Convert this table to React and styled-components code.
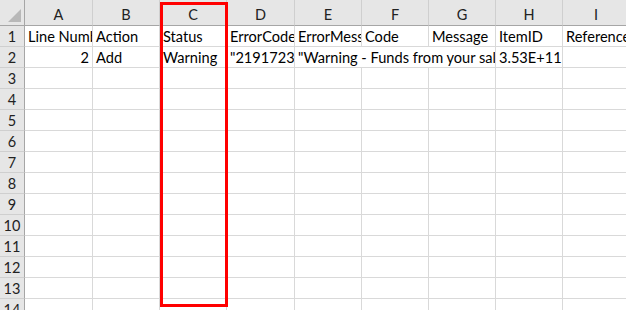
import React from "react";
import styled, { createGlobalStyle } from "styled-components";

const Global = createGlobalStyle`
  html, body { margin: 0; padding: 0; background: #fff; }
  body { font-family: Lato, "Open Sans", "Liberation Sans", sans-serif; }
`;

const widths = [25, 68, 67, 67, 68, 67, 67, 67, 67, 67];

const Sheet = styled.div`
  position: relative;
  width: 626px;
  height: 310px;
  overflow: hidden;
  background: #fff;
`;

const Grid = styled.div`
  display: grid;
  grid-template-columns: ${widths.map((w) => w + "px").join(" ")};
  grid-template-rows: 26px repeat(14, 21px);
  width: 630px;
`;

const Corner = styled.div`
  position: relative;
  background: #e6e6e6;
  border-right: 1px solid #a6a6a6;
  border-bottom: 1px solid #a6a6a6;
  box-sizing: border-box;
  &::after {
    content: "";
    position: absolute;
    right: 3px;
    bottom: 3px;
    width: 0;
    height: 0;
    border-left: 13px solid transparent;
    border-bottom: 13px solid #b8b8b8;
  }
`;

const ColHead = styled.div`
  background: #e6e6e6;
  border-right: 1px solid #cfcfcf;
  border-bottom: 1px solid #a6a6a6;
  box-sizing: border-box;
  display: flex;
  align-items: center;
  justify-content: center;
  padding-top: 4px;
  font-size: 14.5px;
  color: #222;
`;

const RowHead = styled.div`
  background: #e6e6e6;
  border-right: 1px solid #a6a6a6;
  border-bottom: 1px solid #cfcfcf;
  box-sizing: border-box;
  display: flex;
  align-items: center;
  justify-content: center;
  padding-top: 1px;
  font-size: 14.5px;
  color: #222;
`;

const Cell = styled.div`
  grid-column: span ${(p) => p.$span || 1};
  border-right: 1px solid #d9d9d9;
  border-bottom: 1px solid #d9d9d9;
  box-sizing: border-box;
  overflow: hidden;
  white-space: nowrap;
  font-size: 14.6px;
  line-height: 20px;
  padding: 1px 3px 0 3px;
  color: #000;
  text-align: ${(p) => (p.$right ? "right" : "left")};
`;

const Highlight = styled.div`
  position: absolute;
  left: 160px;
  top: 2px;
  width: 68px;
  height: 305px;
  border: 3px solid #ff0000;
  box-sizing: border-box;
  pointer-events: none;
`;

const cols = ["A", "B", "C", "D", "E", "F", "G", "H", "I"];

const rows = [
  [
    { t: "Line Number" },
    { t: "Action" },
    { t: "Status" },
    { t: "ErrorCode" },
    { t: "ErrorMessage" },
    { t: "Code" },
    { t: "Message" },
    { t: "ItemID" },
    { t: "ReferenceID" },
  ],
  [
    { t: "2", right: true },
    { t: "Add" },
    { t: "Warning" },
    { t: '"21917236"' },
    { t: '"Warning - Funds from your sales may not be available immediately"', span: 3 },
    { t: "3.53E+11", right: true },
    { t: "" },
  ],
];

export default function App() {
  const body = [];
  for (let r = 0; r < 14; r++) {
    body.push(<RowHead key={"h" + r}>{r + 1}</RowHead>);
    const data = rows[r] || cols.map(() => ({ t: "" }));
    data.forEach((c, i) =>
      body.push(
        <Cell key={r + "-" + i} $span={c.span} $right={c.right}>
          {c.t}
        </Cell>
      )
    );
  }
  return (
    <>
      <Global />
      <Sheet>
        <Grid>
          <Corner />
          {cols.map((c) => (
            <ColHead key={c}>{c}</ColHead>
          ))}
          {body}
        </Grid>
        <Highlight />
      </Sheet>
    </>
  );
}
